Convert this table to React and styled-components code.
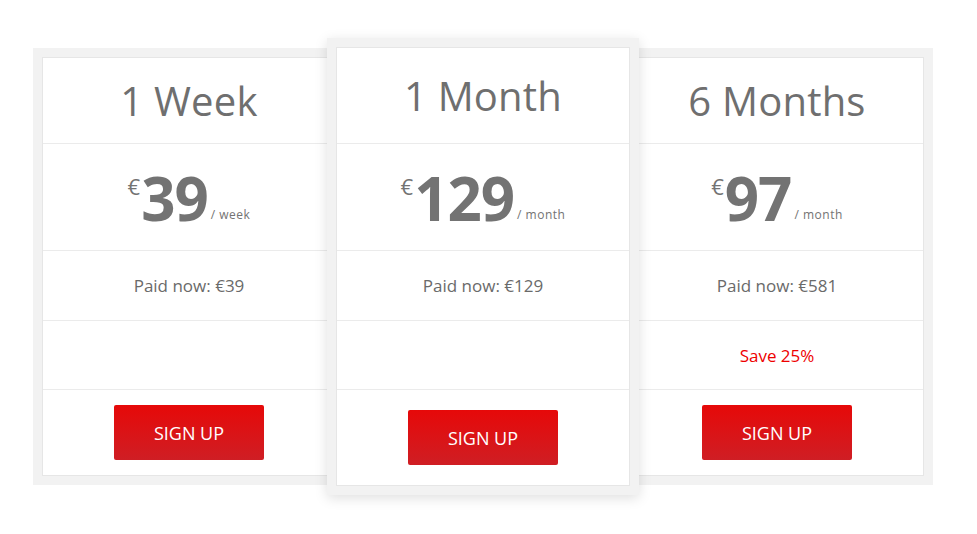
import React from "react";
import styled, { createGlobalStyle } from "styled-components";

const Global = createGlobalStyle`
  html, body { margin: 0; padding: 0; background: #ffffff; }
  body { font-family: "Open Sans", "Noto Sans", sans-serif; }
`;

const Page = styled.div`
  padding: 38px 0 0 33px;
  width: 977px;
  height: 534px;
  box-sizing: border-box;
`;

const Row = styled.div`
  display: flex;
  align-items: center;
  width: 900px;
`;

const Card = styled.div`
  flex: 0 0 312px;
  width: 312px;
  box-sizing: border-box;
  padding: 9px;
  background: #f2f2f2;
  position: relative;
  z-index: ${(p) => (p.$featured ? 2 : 1)};
  margin: ${(p) => (p.$featured ? "0 -18px" : "0")};
  box-shadow: ${(p) => (p.$featured ? "0 3px 12px rgba(0,0,0,0.13)" : "none")};
`;

const Inner = styled.div`
  background: #fff;
  border: 1px solid #e6e6e6;
  display: flex;
  flex-direction: column;
`;

const Cell = styled.div`
  height: ${(p) => p.$h}px;
  box-sizing: border-box;
  border-bottom: ${(p) => (p.$last ? "none" : "1px solid #ebebeb")};
  display: flex;
  align-items: center;
  justify-content: center;
`;

const Title = styled.div`
  font-size: 40px;
  font-weight: 400;
  color: #6f6f6f;
  letter-spacing: 0.2px;
  line-height: 1;
`;

const Price = styled.div`
  display: flex;
  align-items: flex-end;
  color: #737373;
  padding-top: 2px;
`;

const Currency = styled.span`
  font-size: 22px;
  align-self: flex-start;
  margin-top: 3px;
  margin-right: 1px;
`;

const Amount = styled.span`
  font-size: 60px;
  font-weight: 700;
  line-height: 60px;
  letter-spacing: -1px;
`;

const Period = styled.span`
  font-size: 12px;
  letter-spacing: 0.5px;
  margin-left: 3px;
  margin-bottom: 5px;
`;

const Paid = styled.div`
  font-size: 17px;
  color: #6a6a6a;
`;

const Save = styled.div`
  font-size: 17px;
  color: #ee0000;
`;

const Button = styled.button`
  width: 150px;
  height: 55px;
  border: none;
  border-radius: 2px;
  background: linear-gradient(to bottom, #e60909, #cf1e24);
  color: #fff;
  font-family: "Open Sans", "Noto Sans", sans-serif;
  font-size: 18px;
  font-weight: 400;
  cursor: pointer;
`;

const plans = [
  { title: "1 Week", amount: "39", period: "/ week", paid: "€39", save: "" },
  { title: "1 Month", amount: "129", period: "/ month", paid: "€129", save: "", featured: true },
  { title: "6 Months", amount: "97", period: "/ month", paid: "€581", save: "Save 25%" },
];

export default function App() {
  return (
    <>
      <Global />
      <Page>
        <Row>
          {plans.map((p) => (
            <Card key={p.title} $featured={p.featured}>
              <Inner>
                <Cell $h={p.featured ? 96 : 86}>
                  <Title>{p.title}</Title>
                </Cell>
                <Cell $h={107}>
                  <Price>
                    <Currency>€</Currency>
                    <Amount>{p.amount}</Amount>
                    <Period>{p.period}</Period>
                  </Price>
                </Cell>
                <Cell $h={70}>
                  <Paid>Paid now: {p.paid}</Paid>
                </Cell>
                <Cell $h={69}>{p.save && <Save>{p.save}</Save>}</Cell>
                <Cell $h={p.featured ? 95 : 85} $last>
                  <Button>SIGN UP</Button>
                </Cell>
              </Inner>
            </Card>
          ))}
        </Row>
      </Page>
    </>
  );
}
